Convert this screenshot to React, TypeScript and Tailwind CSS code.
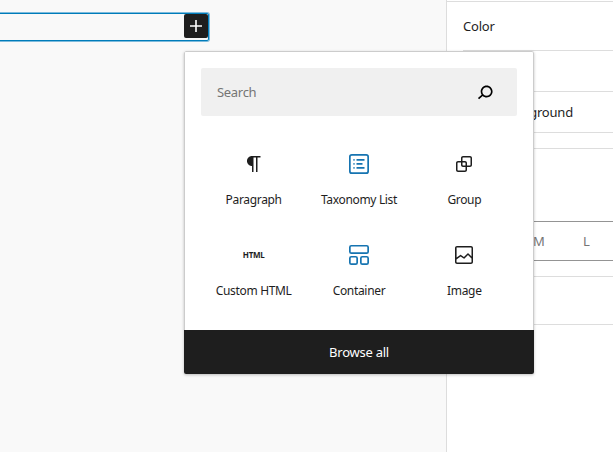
import type { ReactNode } from 'react';

function Icon({ children, className = 'size-6' }: { children: ReactNode; className?: string }) {
  return (
    <svg viewBox="0 0 24 24" className={className} fill="currentColor" aria-hidden="true">
      {children}
    </svg>
  );
}

const blocks: { label: string; icon: ReactNode }[] = [
  {
    label: 'Paragraph',
    icon: (
      <Icon>
        <path d="m9.99609 14v-.2251l.00391.0001v6.225h1.5v-14.5h2.5v14.5h1.5v-14.5h3v-1.5h-8.50391c-2.76142 0-5 2.23858-5 5 0 2.7614 2.23858 5 5 5z" />
      </Icon>
    ),
  },
  {
    label: 'Taxonomy List',
    icon: (
      <Icon className="size-6 text-[#1674b1]">
        <rect x="2.85" y="2.85" width="18.3" height="18.3" rx="2" fill="none" stroke="currentColor" strokeWidth="1.7" />
        <path d="M9.5 7.1h8v1.7h-8zM9.5 11.1h6v1.7h-6zM9.5 15.1h8v1.7h-8z" />
        <path opacity="0.6" d="M6 7.1h2v1.7H6zM6 11.1h2v1.7H6zM6 15.1h2v1.7H6z" />
      </Icon>
    ),
  },
  {
    label: 'Group',
    icon: (
      <Icon>
        <path d="M18 4h-7c-1.1 0-2 .9-2 2v3H6c-1.1 0-2 .9-2 2v7c0 1.1.9 2 2 2h7c1.1 0 2-.9 2-2v-3h3c1.1 0 2-.9 2-2V6c0-1.1-.9-2-2-2zm-4.5 14c0 .3-.2.5-.5.5H6c-.3 0-.5-.2-.5-.5v-7c0-.3.2-.5.5-.5h3V13c0 1.1.9 2 2 2h2.5v3zm0-4.5H11c-.3 0-.5-.2-.5-.5v-2.5H13c.3 0 .5.2.5.5v2.5zm5-.5c0 .3-.2.5-.5.5h-3V11c0-1.1-.9-2-2-2h-2.5V6c0-.3.2-.5.5-.5h7c.3 0 .5.2.5.5v7z" />
      </Icon>
    ),
  },
  {
    label: 'Custom HTML',
    icon: <span className="text-[8px] leading-6 font-bold tracking-[-0.25px]">HTML</span>,
  },
  {
    label: 'Container',
    icon: (
      <Icon className="size-6 text-[#1674b1]">
        <g fill="none" stroke="currentColor" strokeWidth="1.7">
          <rect x="2.85" y="2.75" width="18.3" height="7.4" rx="1.5" />
          <rect x="2.85" y="13.75" width="7.3" height="7.4" rx="1.5" />
          <rect x="13.85" y="13.75" width="7.3" height="7.4" rx="1.5" />
        </g>
      </Icon>
    ),
  },
  {
    label: 'Image',
    icon: (
      <Icon>
        <path d="M19 3H5c-1.1 0-2 .9-2 2v14c0 1.1.9 2 2 2h14c1.1 0 2-.9 2-2V5c0-1.1-.9-2-2-2zM5 4.5h14c.3 0 .5.2.5.5v8.4l-3-2.9c-.3-.3-.8-.3-1 0L11.9 14 9 12c-.3-.2-.6-.2-.8 0l-3.6 2.6V5c-.1-.3.1-.5.4-.5zm14 15H5c-.3 0-.5-.2-.5-.5v-2.4l4.1-3 3 1.9c.3.2.7.2.9-.1L16 12l3.5 3.4V19c0 .3-.2.5-.5.5z" />
      </Icon>
    ),
  },
];

function Inserter() {
  return (
    <div className="absolute top-[51px] left-[184px] flex h-[323px] w-[350px] flex-col overflow-hidden rounded-xs bg-white shadow-[0_1px_3px_rgba(0,0,0,0.25)]">
      <div className="flex-1 rounded-t-xs border border-b-0 border-[#ccc] px-4 pt-4">
        <div className="flex h-12 items-center justify-between rounded-xs bg-[#f0f0f0] pr-[19px] pl-4">
          <span className="pt-0.5 text-[13px] tracking-[-0.3px] text-[#757575]">Search</span>
          <Icon className="size-[26px] text-black">
            <path d="M13.5 6C10.5 6 8 8.5 8 11.5c0 1.1.3 2.1.9 3l-3.4 3 1 1.1 3.4-2.9c1 .9 2.2 1.4 3.6 1.4 3 0 5.5-2.5 5.5-5.5C19 8.5 16.5 6 13.5 6zm0 9.5c-2.2 0-4-1.8-4-4s1.8-4 4-4 4 1.8 4 4-1.8 4-4 4z" />
          </Icon>
        </div>
        <div className="grid grid-cols-3 pt-4">
          {blocks.map(({ label, icon }) => (
            <button key={label} className="flex h-[91px] flex-col items-center pt-5">
              <span className="flex h-6 items-center">{icon}</span>
              <span className="mt-4 text-xs leading-4 tracking-[-0.33px] whitespace-nowrap">{label}</span>
            </button>
          ))}
        </div>
      </div>
      <button className="h-11 shrink-0 bg-[#1e1e1e] pt-0.5 text-[13px] tracking-[-0.25px] text-white">Browse all</button>
    </div>
  );
}

export default function App() {
  return (
    <div className="relative flex h-[452px] w-[613px] overflow-hidden bg-[#f9f9f9] font-['Noto_Sans',sans-serif] text-[#1e1e1e]">
      <main className="w-[446px] pt-3">
        <div className="flex h-[30px] w-[210px] justify-end rounded-r-[3px] border border-l-0 border-[#7ebbdc] pt-px pr-px shadow-[inset_0_1px_0_#007cba,inset_0_-1px_0_#007cba,inset_-1px_0_0_#007cba]">
          <button className="flex size-6 items-center justify-center rounded-xs bg-[#1e1e1e] text-white">
            <Icon>
              <path d="M18 11.2h-5.2V6h-1.6v5.2H6v1.6h5.2V18h1.6v-5.2H18z" />
            </Icon>
          </button>
        </div>
      </main>
      <aside className="flex flex-1 flex-col border-l border-[#ddd] bg-white pt-px text-[13px]">
        <div className="flex h-[49px] items-center border-t border-[#ddd] pt-0.5 pl-4 tracking-[-0.2px]">Color</div>
        <div className="ml-4 h-[41px] border-t border-[#ddd]" />
        <div className="ml-4 flex h-[41px] items-center border-t border-[#ddd] pt-0.5 pl-[38px] tracking-[-0.2px]">Background</div>
        <div className="ml-4 h-4 border-t border-[#ddd]" />
        <div className="h-[73px] border-t border-[#ddd]" />
        <div className="ml-4 flex h-10 items-center border-y border-[#949494] pt-0.5 pl-[70px] text-[#757575]">
          <span className="w-[50px]">M</span>
          <span>L</span>
        </div>
        <div className="h-[15px]" />
        <div className="box-content h-[47px] border-y border-[#ddd]" />
      </aside>
      <Inserter />
    </div>
  );
}
